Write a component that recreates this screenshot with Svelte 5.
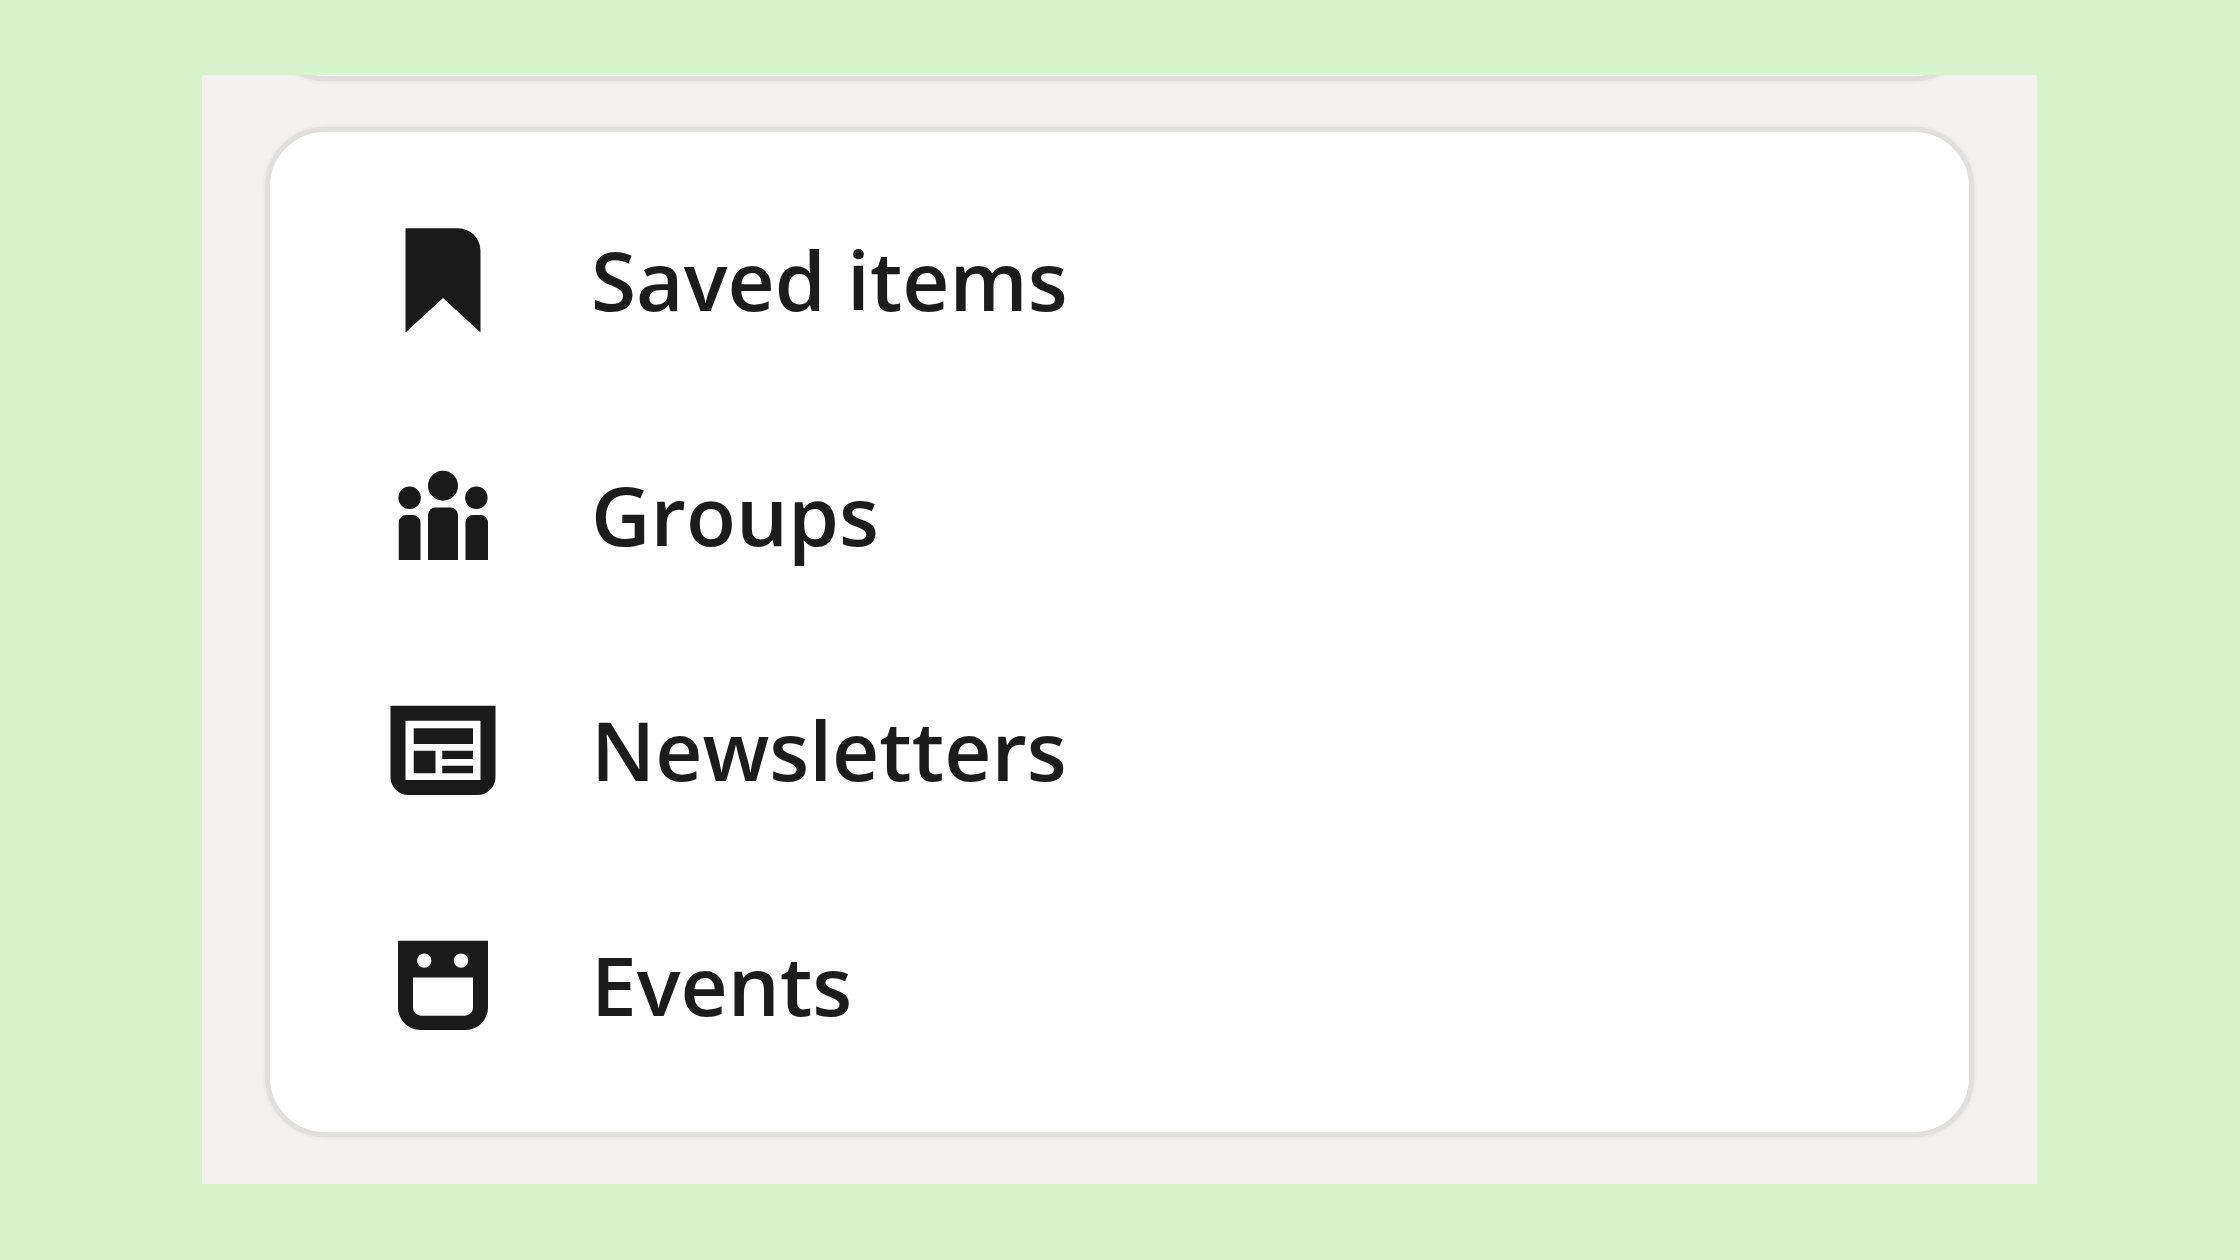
<script>
	const items = [
		{ icon: 'bookmark', text: 'Saved items', href: '#saved-items' },
		{ icon: 'groups', text: 'Groups', href: '#groups' },
		{ icon: 'newsletter', text: 'Newsletters', href: '#newsletters' },
		{ icon: 'calendar', text: 'Events', href: '#events' }
	]

	// filled shapes on a 16 unit grid, holes are cut with evenodd
	const icons = {
		bookmark: 'M3 1.1h7a3 3 0 0 1 3 3V15l-5-4.6L3 15z',
		groups:
			'M8 2.1a2 2 0 1 1 0 4 2 2 0 0 1 0-4z' +
			'M3.55 4.2a1.5 1.5 0 1 1 0 3 1.5 1.5 0 0 1 0-3z' +
			'M12.45 4.2a1.5 1.5 0 1 1 0 3 1.5 1.5 0 0 1 0-3z' +
			'M6 14V8a1 1 0 0 1 1-1h2a1 1 0 0 1 1 1v6z' +
			'M2.1 14V9a1 1 0 0 1 1-1h.9a1 1 0 0 1 1 1v5z' +
			'M11 14V9a1 1 0 0 1 1-1h1a1 1 0 0 1 1 1v5z',
		newsletter:
			'M1 2.1h14v9.5a2.4 2.4 0 0 1-2.4 2.4H3.4A2.4 2.4 0 0 1 1 11.6z' +
			'M3 4.1V12h10V4.1zM4.1 5.1H12v2.1H4.1zM4.1 8.1H7v3H4.1zM7.9 8.1H12v1.1H7.9zM7.9 10.1H12v1H7.9z',
		calendar:
			'M2 2.1h12V11a3 3 0 0 1-3 3H5a3 3 0 0 1-3-3z' +
			'M5.5 3.8a.95.95 0 1 0 0 1.9.95.95 0 0 0 0-1.9z' +
			'M10.4 3.8a.95.95 0 1 0 0 1.9.95.95 0 0 0 0-1.9z' +
			'M4 7v4a1.1 1.1 0 0 0 1.1 1.1h5.8A1.1 1.1 0 0 0 12 11V7z'
	}
</script>

<main>
	<div class="card previous"></div>
	<nav class="card">
		<ul>
			{#each items as item (item.icon)}
				<li>
					<a href={item.href}>
						<svg viewBox="0 0 16 16" aria-hidden="true">
							<path fill-rule="evenodd" d={icons[item.icon]} />
						</svg>
						<span>{item.text}</span>
					</a>
				</li>
			{/each}
		</ul>
	</nav>
</main>

<style>
	:global(body) {
		background: #d8f4cc;
	}
	main {
		margin: 75px 203px 76px 202px;
		padding: 0 63px 47px;
		background: #f4f2ee;
		overflow: hidden;
		font-family: "Open Sans", "Noto Sans", sans-serif;
	}
	.card {
		border: 5px solid #e0dfdb;
		border-radius: 60px;
		background: #fff;
		box-shadow: 0 0 4px #e0dfdb;
	}
	/* only the bottom edge of the card above is in view */
	.previous {
		height: 120px;
		margin-top: -124px;
		margin-bottom: 46px;
	}
	ul {
		display: flex;
		flex-direction: column;
		gap: 115px;
		margin: 0;
		padding: 88px 113px 87px;
		list-style-type: none;
	}
	a {
		display: flex;
		align-items: center;
		gap: 88px;
		color: #1c1c1c;
		font-size: 82px;
		font-weight: 600;
		line-height: 118px;
		text-decoration: none;
	}
	svg {
		flex: none;
		width: 120px;
		height: 120px;
		fill: #1a1a1a;
	}
	span {
		padding-bottom: 2px;
	}
</style>
